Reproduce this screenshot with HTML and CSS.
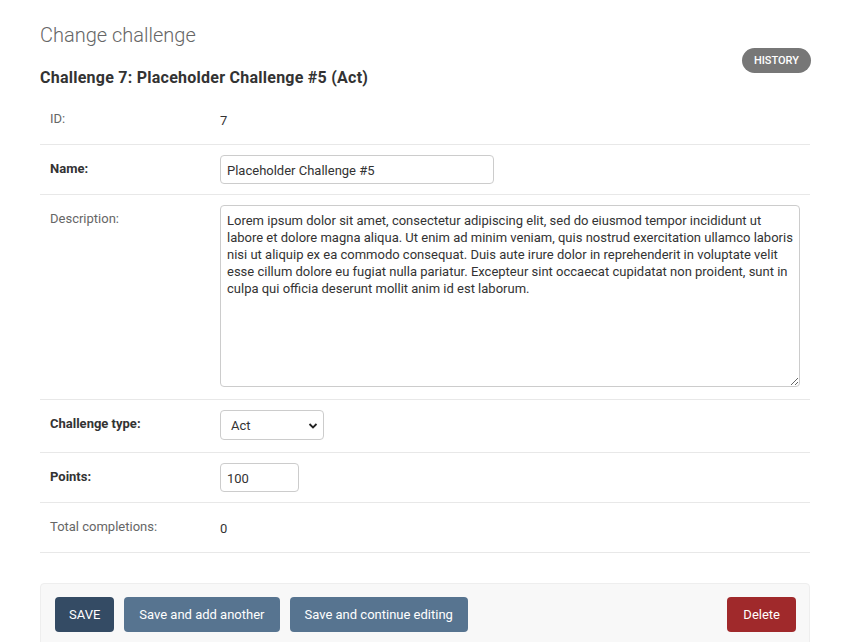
FILE: index.html
```html
<!DOCTYPE html>
<html>
<head>
<meta charset="utf-8">
<link rel="stylesheet" href="styles.css">
</head>
<body>
<div class="content">
  <h1 class="title">Change challenge</h1>
  <div class="header">
    <h2 class="obj">Challenge 7: Placeholder Challenge #5 (Act)</h2>
    <a class="history">HISTORY</a>
  </div>
  <div class="fieldset">
    <div class="row">
      <label class="lbl">ID:</label>
      <div class="val">7</div>
    </div>
    <div class="row">
      <label class="lbl req">Name:</label>
      <input class="inp name" type="text" value="Placeholder Challenge #5">
    </div>
    <div class="row tall">
      <label class="lbl">Description:</label>
      <textarea class="ta">Lorem ipsum dolor sit amet, consectetur adipiscing elit, sed do eiusmod tempor incididunt ut labore et dolore magna aliqua. Ut enim ad minim veniam, quis nostrud exercitation ullamco laboris nisi ut aliquip ex ea commodo consequat. Duis aute irure dolor in reprehenderit in voluptate velit esse cillum dolore eu fugiat nulla pariatur. Excepteur sint occaecat cupidatat non proident, sunt in culpa qui officia deserunt mollit anim id est laborum.</textarea>
    </div>
    <div class="row tall">
      <label class="lbl req">Challenge type:</label>
      <div class="sel">
        <span>Act</span>
        <svg width="10" height="8" viewBox="0 0 10 8"><path d="M1.5 2 L5 5.5 L8.5 2" fill="none" stroke="#222" stroke-width="1.8"/></svg>
      </div>
    </div>
    <div class="row">
      <label class="lbl req">Points:</label>
      <input class="inp points" type="text" value="100">
    </div>
    <div class="row">
      <label class="lbl">Total completions:</label>
      <div class="val">0</div>
    </div>
  </div>
  <div class="submit">
    <button class="btn dflt">SAVE</button>
    <button class="btn">Save and add another</button>
    <button class="btn">Save and continue editing</button>
    <span class="spacer"></span>
    <button class="btn del">Delete</button>
  </div>
</div>
</body>
</html>
```
FILE: styles.css
```css
* { box-sizing: border-box; }
body {
  margin: 0;
  font-family: Roboto, "Open Sans", sans-serif;
  font-size: 13px;
  color: #333;
  background: #fff;
}
.content {
  padding: 21px 32px 0 40px;
}
.title {
  margin: 0;
  font-size: 20px;
  font-weight: 300;
  color: #666;
  line-height: 28px;
}
.header {
  display: flex;
  justify-content: space-between;
  align-items: flex-start;
  margin-top: -1px;
}
.obj {
  margin: 20px 0 0 0;
  font-size: 16px;
  font-weight: 700;
  letter-spacing: 0.25px;
  line-height: 20px;
  color: #333;
}
.history {
  background: #777;
  color: #fff;
  font-size: 11px;
  font-weight: 500;
  border-radius: 13px;
  height: 25px;
  line-height: 25px;
  padding: 0 12px;
  margin-right: -1px;
}
.fieldset {
  margin-top: 7px;
}
.row {
  display: flex;
  align-items: flex-start;
  padding: 10px 10px;
  border-bottom: 1px solid #e8e8e8;
  min-height: 50px;
}
.row.tall { padding-bottom: 12px; }
.lbl {
  width: 170px;
  flex: none;
  color: #666;
  padding-top: 6px;
  line-height: 16px;
}
.lbl.req { font-weight: 700; color: #333; }
.val {
  padding-top: 8px;
  line-height: 16px;
}
.inp {
  font-family: inherit;
  font-size: 13px;
  color: #333;
  height: 29px;
  border: 1px solid #ccc;
  border-radius: 4px;
  padding: 5px 6px 4px;
  margin: 0;
}
.name { width: 274px; }
.points { width: 79px; }
.ta {
  font-family: inherit;
  font-size: 13px;
  line-height: 17px;
  color: #333;
  width: 582px;
  height: 182px;
  border: 1px solid #ccc;
  border-radius: 4px;
  padding: 6px 5px 6px 6px;
  margin: 0;
  resize: both;
}
.sel {
  width: 104px;
  height: 30px;
  border: 1px solid #ccc;
  border-radius: 4px;
  display: flex;
  align-items: center;
  justify-content: space-between;
  padding: 1px 5px 0 10px;
}
.submit {
  margin-top: 30px;
  background: #f8f8f8;
  border: 1px solid #eee;
  border-radius: 4px;
  padding: 13px 13px 13px 14px;
  display: flex;
  gap: 10px;
}
.spacer { flex: 1; }
.btn {
  font-family: inherit;
  font-size: 13px;
  border: none;
  border-radius: 4px;
  height: 35px;
  padding: 0 15px;
  color: #fff;
  background: #577490;
}
.btn.dflt { background: #344b64; padding: 0 14px; }
.btn.del { background: #a0292b; padding: 0 16px; }
```
